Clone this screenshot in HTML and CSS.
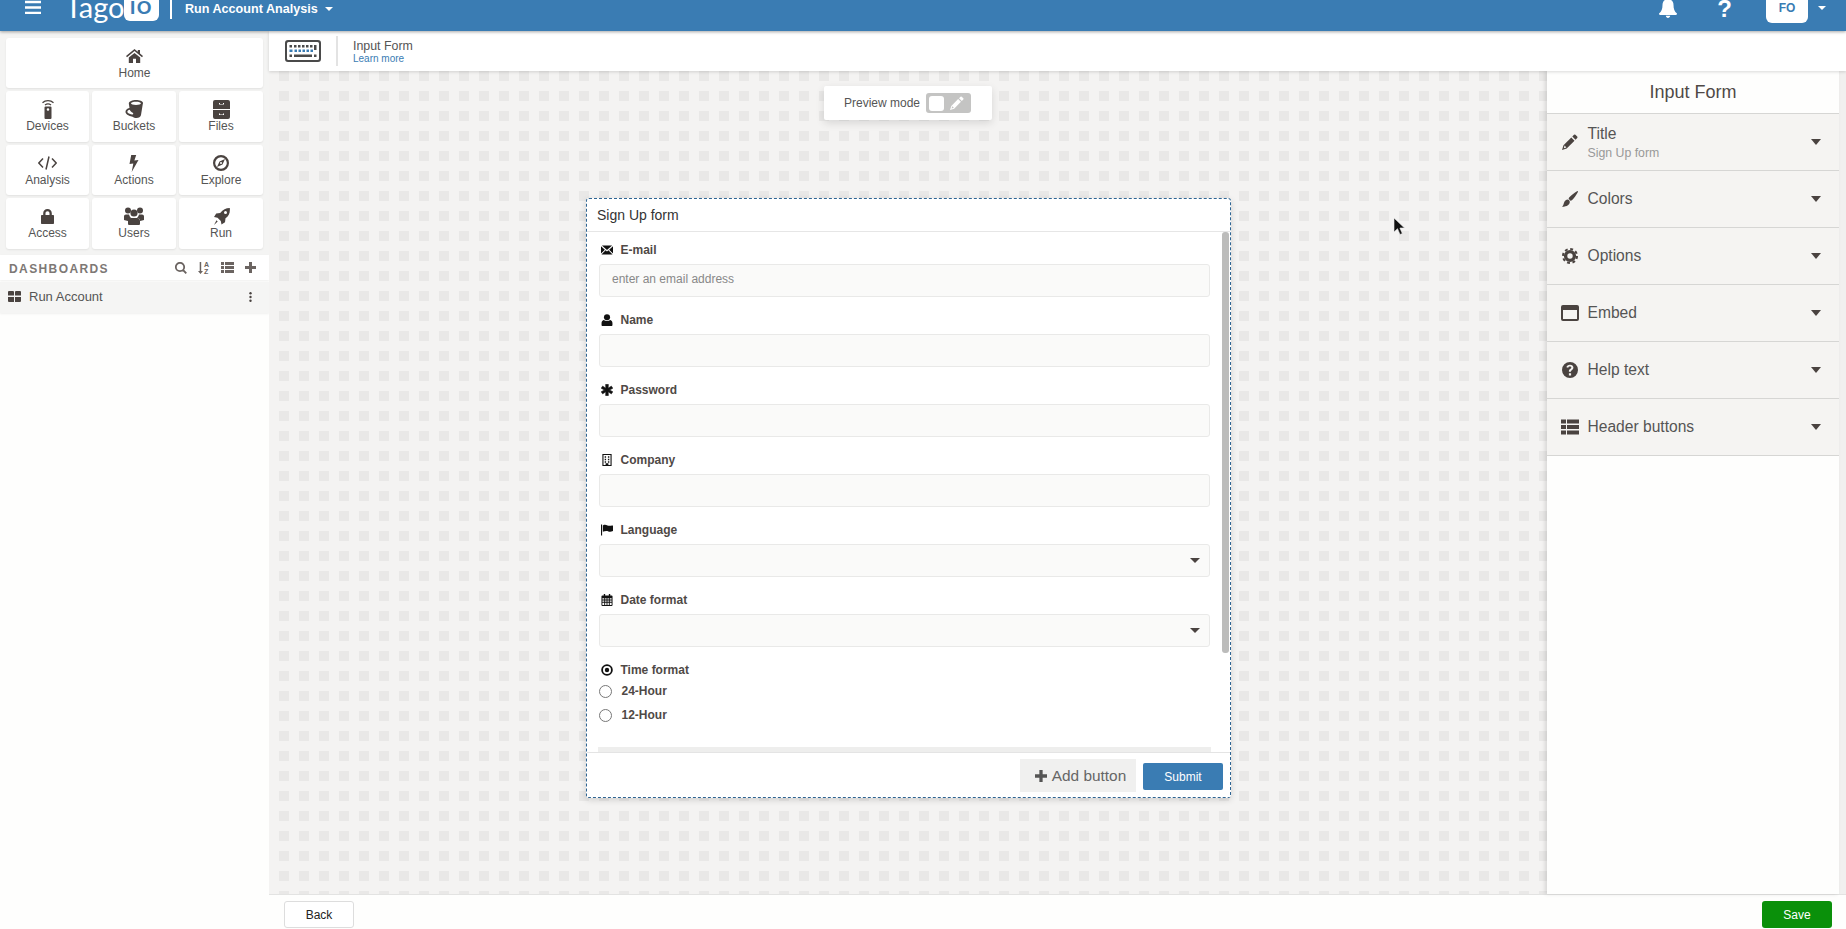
FILE: index.html
```html
<!DOCTYPE html>
<html lang="en">
<head>
<meta charset="utf-8">
<title>Input Form</title>
<link rel="stylesheet" href="styles.css">
</head>
<body>
<svg class="sprite" aria-hidden="true">
  <symbol id="i-home" viewBox="0 0 17 14"><path d="M8.5 0 0 7l1 1.2L8.5 2 16 8.2 17 7l-3-2.5V1h-2.200v1.700zM2.800 8.600 8.500 4l5.700 4.600V14H10V9.800H7V14H2.800z"/></symbol>
  <symbol id="i-device" viewBox="0 0 14 20"><path d="M1.500 3.800C4.500 1 9.500 1 12.500 3.800" fill="none" stroke="currentColor" stroke-width="1.300"/><path d="M4 6c1.800-1.300 4.200-1.300 6 0" fill="none" stroke="currentColor" stroke-width="1.300"/><path fill-rule="evenodd" d="M4.500 7.500h5a1 1 0 0 1 1 1V19a1 1 0 0 1-1 1h-5a1 1 0 0 1-1-1V8.500a1 1 0 0 1 1-1zM7 9.200a1.300 1.300 0 1 0 0 2.600 1.300 1.300 0 0 0 0-2.600z"/></symbol>
  <symbol id="i-bucket" viewBox="0 0 18 18"><path fill-rule="evenodd" d="M3.800 3.500C3.800 1.500 7.500 0 11 0s7 1 7 3c0 .5-.1 1-.3 1.500L16 15c-.3 1.800-2.300 3-4.500 3-1.500 0-3-.5-4-1.300C5.500 16.500 1.800 15 .8 13-.2 11 1.300 8.600 4.500 8zM6 3.300c0 1 2.200 1.700 5 1.700s4.900-.7 4.900-1.700S13.800 1.700 11 1.700 6 2.300 6 3.300zM4.800 9.800c-2 .3-2.900 1.600-2.200 2.700.7 1 3 1.700 4.500 1.900 1.200.2 1.600-1 .6-1.600-1.200-.7-2.500-1.500-2.900-3z"/></symbol>
  <symbol id="i-files" viewBox="0 0 17 19"><path fill-rule="evenodd" d="M2 0h13a2 2 0 0 1 2 2v7H0V2a2 2 0 0 1 2-2zM0 10h17v7a2 2 0 0 1-2 2H2a2 2 0 0 1-2-2zM6 4.500V3h1v1h3V3h1v1.500zM6 15v-1.500h1v1h3v-1h1V15z"/></symbol>
  <symbol id="i-code" viewBox="0 0 19 14"><path d="M5 2.500.8 7 5 11.500M14 2.500 18.200 7 14 11.500M11 .5 8 13.500" fill="none" stroke="currentColor" stroke-width="1.500"/></symbol>
  <symbol id="i-bolt" viewBox="0 0 10 17"><path d="M2.200 0h5L5.400 5.500 9.500 5 2.700 17l1.600-8.500L.500 9z"/></symbol>
  <symbol id="i-compass" viewBox="0 0 16 16"><path fill-rule="evenodd" d="M8 0a8 8 0 1 1 0 16A8 8 0 0 1 8 0zm0 2.200a5.800 5.800 0 1 0 0 11.600A5.800 5.800 0 0 0 8 2.200zM12 4l-2.500 5.500L4 12l2.500-5.500zM8 7a1 1 0 1 0 0 2 1 1 0 0 0 0-2z"/></symbol>
  <symbol id="i-lock" viewBox="0 0 13 15"><path fill-rule="evenodd" d="M6.500 0C9 0 10.800 1.800 10.800 4.300V6h1.200c.6 0 1 .4 1 1v7c0 .6-.4 1-1 1H1c-.6 0-1-.4-1-1V7c0-.6.4-1 1-1h1.200V4.300C2.200 1.800 4 0 6.500 0zm0 2.200c-1.200 0-2 .9-2 2.100V6h4V4.300c0-1.200-.8-2.100-2-2.100z"/></symbol>
  <symbol id="i-users" viewBox="0 0 20 18"><circle cx="4" cy="3.500" r="3"/><circle cx="16" cy="3.500" r="3"/><circle cx="10" cy="6" r="3.600"/><path d="M0 13V9.500C0 8.300.8 7.500 2 7.500h3c.5 1.700 1 2.500 2 3.200-1.500.6-2.600 1.600-3.200 3.300zM20 13V9.500c0-1.200-.8-2-2-2h-3c-.5 1.700-1 2.500-2 3.200 1.500.6 2.600 1.600 3.200 3.300zM7 11h6c1.800 0 3 1.300 3 3v2.500c0 1-.5 1.500-1.500 1.500h-9C4.500 18 4 17.500 4 16.500V14c0-1.700 1.200-3 3-3z"/></symbol>
  <symbol id="i-rocket" viewBox="0 0 17 17"><path fill-rule="evenodd" d="M16.800 0c.5 4.500-1 8-4.300 10.300l-.5 4-3.500 2.200-.7-3.500-3.300-3.300L1 9l2.200-3.500 4-.5C10 1.500 12.800.2 16.800 0zM12.500 3a1.500 1.500 0 1 0 0 3 1.500 1.500 0 0 0 0-3zM3.500 12.300l1.200 1.200L1 17z"/></symbol>
  <symbol id="i-search" viewBox="0 0 12 12"><path d="M5 .8a4.200 4.200 0 1 1 0 8.400A4.200 4.200 0 0 1 5 .8zM8 8l3.300 3.300" fill="none" stroke="currentColor" stroke-width="1.800"/></symbol>
  <symbol id="i-list" viewBox="0 0 13 11"><path d="M0 0h3v3H0zM4 0h9v3H4zM0 4h3v3H0zM4 4h9v3H4zM0 8h3v3H0zM4 8h9v3H4z"/></symbol>
  <symbol id="i-plus" viewBox="0 0 11 11"><path d="M4 0h3v4h4v3H7v4H4V7H0V4h4z"/></symbol>
  <symbol id="i-grid" viewBox="0 0 13 11"><path d="M0 1a1 1 0 0 1 1-1h4a1 1 0 0 1 1 1v3.500H0zM7 1a1 1 0 0 1 1-1h4a1 1 0 0 1 1 1v3.500H7zM0 6h6v5H1a1 1 0 0 1-1-1zM7 6h6v4a1 1 0 0 1-1 1H7z"/></symbol>
  <symbol id="i-kebab" viewBox="0 0 3 10"><circle cx="1.500" cy="1.200" r="1.200"/><circle cx="1.500" cy="5" r="1.200"/><circle cx="1.500" cy="8.800" r="1.200"/></symbol>
  <symbol id="i-mail" viewBox="0 0 13 10"><path d="M1 0h11L6.500 5zM0 1l4.200 3.700L0 8.700zM13 1v7.700L8.800 4.700zM5 5.400l1.500 1.300L8 5.400 12.500 10H.5z"/></symbol>
  <symbol id="i-user" viewBox="0 0 10 11"><circle cx="5" cy="3" r="2.800"/><path d="M2 5.500c1.700 1.300 4.300 1.300 6 0 1.300.3 2 1.500 2 3V10c0 .6-.4 1-1 1H1c-.6 0-1-.4-1-1V8.500c0-1.500.7-2.700 2-3z"/></symbol>
  <symbol id="i-asterisk" viewBox="0 0 12 12"><path stroke="currentColor" stroke-width=".7" d="M4.700.4h2.600l-.2 3.800 3.300-2 1.300 2.100L8.300 6l3.400 1.700-1.300 2.100-3.300-2 .2 3.800H4.700l.2-3.800-3.300 2L.3 7.700 3.700 6 .3 4.300l1.300-2.100 3.300 2z"/></symbol>
  <symbol id="i-building" viewBox="0 0 10 13"><path fill-rule="evenodd" d="M0 0h10v13H0zm1.200 1.200v10.600h2.300V10h3v1.800h2.300V1.200zM2.500 2.500h1.500V4H2.500zM6 2.500h1.500V4H6zM2.500 5.200h1.500v1.500H2.500zM6 5.200h1.500v1.500H6zM2.500 7.900h1.500v1.500H2.500zM6 7.900h1.500v1.500H6z"/></symbol>
  <symbol id="i-flag" viewBox="0 0 13 12"><path d="M0 0h1.200v12H0zM2 1c2-1 3.500-.5 5 0s3 .5 5 0c.5 0 1 0 1 .5V7c-2 1-3.500 1-5 .5S4 7 2 8z"/></symbol>
  <symbol id="i-calendar" viewBox="0 0 12 13"><path fill-rule="evenodd" d="M2.500 0h1.500v1.500h4V0h1.500v1.500H11c.6 0 1 .4 1 1V12c0 .6-.4 1-1 1H1c-.6 0-1-.4-1-1V2.500c0-.6.4-1 1-1h1.500zM1 4.500V6h2V4.500zM4 4.500V6h1.500V4.500zM6.500 4.500V6H8V4.500zM9 4.500V6h2V4.500zM1 7v1.500h2V7zM4 7v1.500h1.500V7zM6.500 7v1.500H8V7zM9 7v1.500h2V7zM1 9.500V12h2V9.500zM4 9.500V12h1.500V9.500zM6.500 9.500V12H8V9.500zM9 9.500V12h2V9.500z"/></symbol>
  <symbol id="i-dot" viewBox="0 0 12 12"><circle cx="6" cy="6" r="4.900" fill="none" stroke="currentColor" stroke-width="1.800"/><circle cx="6" cy="6" r="2.200"/></symbol>
  <symbol id="i-pencil" viewBox="0 0 16 16"><path d="M12 .8a1 1 0 0 1 1.400 0l1.800 1.800a1 1 0 0 1 0 1.400L13.500 5.700 10.300 2.500zM9.300 3.500l3.200 3.200-7.800 7.800L0 16l1.500-4.700zM2.600 11.600l-.8 2.600 2.600-.8z"/></symbol>
  <symbol id="i-brush" viewBox="0 0 16 16"><path d="M15 .2c.6-.4 1.200.3.900.9-1.300 2.500-3.800 6-5.500 7.700-.6.600-1.300.9-2 .9L6.600 7.800c.2-.7.500-1.400 1-1.900C9.500 4 12.500 1.500 15 .2zM5.800 8.600c1 .2 1.900 1.100 2 2.200 0 2.800-2.500 5-7.800 5 1.500-1.100 1.500-2.600 2-4 .5-1.700 2-3.200 3.800-3.200z"/></symbol>
  <symbol id="i-gear" viewBox="0 0 16 16"><circle cx="8" cy="8" r="4.400" fill="none" stroke="currentColor" stroke-width="3.400"/><circle cx="8" cy="8" r="7" fill="none" stroke="currentColor" stroke-width="2" stroke-dasharray="2.900 2.600"/></symbol>
  <symbol id="i-window" viewBox="0 0 18 16"><path fill-rule="evenodd" d="M2 0h14a2 2 0 0 1 2 2v12a2 2 0 0 1-2 2H2a2 2 0 0 1-2-2V2a2 2 0 0 1 2-2zm0 5v9h14V5z"/></symbol>
  <symbol id="i-help" viewBox="0 0 16 16"><path fill-rule="evenodd" d="M8 0a8 8 0 1 1 0 16A8 8 0 0 1 8 0zM6.900 11.200v2.200h2.200v-2.200zM8 2.700c-2 0-3.200 1-3.600 2.500l1.800.6c.3-.8.800-1.200 1.700-1.200s1.400.4 1.400 1c0 .7-.5 1-1.200 1.500-1 .6-1.200 1.300-1.200 2.200v.4h2v-.3c0-.5.300-.7 1-1.200.9-.6 1.500-1.400 1.500-2.600 0-1.700-1.400-2.900-3.400-2.900z"/></symbol>
  <symbol id="i-table" viewBox="0 0 18 15"><path d="M0 0h5v4H0zM6 0h12v4H6zM0 5.500h5v4H0zM6 5.500h12v4H6zM0 11h5v4H0zM6 11h12v4H6z"/></symbol>
  <symbol id="i-bell" viewBox="0 0 18 18"><path d="M9 -2c1 0 1.500.6 1.500 1.400C13 0 14.500 2 14.500 5c0 4 1 6.500 3.500 8.500 0 .8-.5 1.500-1.300 1.500H1.300C.5 15 0 14.300 0 13.500 2.500 11.500 3.500 9 3.500 5 3.500 2 5-.1 7.500-.6 7.500-1.400 8-2 9-2zM6.800 15.800h4.400C11 17.100 10.100 18 9 18s-2-.9-2.200-2.200z"/></symbol>
  <symbol id="i-keyboard" viewBox="0 0 36 22"><path fill-rule="evenodd" d="M3 0h30a3 3 0 0 1 3 3v16a3 3 0 0 1-3 3H3a3 3 0 0 1-3-3V3a3 3 0 0 1 3-3zm.5 2A1.500 1.500 0 0 0 2 3.500v15A1.500 1.500 0 0 0 3.500 20h29a1.500 1.500 0 0 0 1.500-1.500v-15A1.500 1.500 0 0 0 32.500 2z"/><path d="M4.500 5H7v2.500H4.500zM9 5h2.500v2.500H9zM13 5h2.500v2.500H13zM17 5h2.500v2.500H17zM21 5h2.500v2.500H21zM25 5h2.500v2.500H25zM29 5h2.500v5H29z"/><path d="M4.500 9.500h3v2.500h-3zM9.500 9.500H12v2.500H9.500zM13.500 9.500H16v2.500h-2.500zM17.500 9.500H20v2.500h-2.500zM21.500 9.500H24v2.500h-2.500zM25.500 9.500H28v2.500h-2.500z" fill="#3a7cb3"/><path d="M4.500 14.500H7V17H4.500zM9 14.500h18V17H9zM29 14.500h2.500V17H29z"/></symbol>
</svg>

<div class="app">
  <header class="topbar">
    <svg class="hamburger" viewBox="0 0 16 14"><path d="M0 .8h16v2.400H0zM0 6.300h16v2.400H0zM0 11.800h16v2.400H0z"/></svg>
    <span class="logo-word">Tago</span>
    <span class="logo-box">IO</span>
    <span class="top-sep"></span>
    <span class="top-title">Run Account Analysis</span>
    <span class="caret caret-white caret-title"></span>
    <span class="top-spacer"></span>
    <svg class="top-bell"><use href="#i-bell"/></svg>
    <span class="top-help">?</span>
    <span class="top-user">FO</span>
    <span class="caret caret-white caret-user"></span>
  </header>

  <div class="main">
    <aside class="sidebar">
      <nav class="nav-grid">
        <a class="nav-btn nav-home"><svg class="ic-home"><use href="#i-home"/></svg><span>Home</span></a>
        <a class="nav-btn"><svg class="ic-device"><use href="#i-device"/></svg><span>Devices</span></a>
        <a class="nav-btn"><svg class="ic-bucket"><use href="#i-bucket"/></svg><span>Buckets</span></a>
        <a class="nav-btn"><svg class="ic-files"><use href="#i-files"/></svg><span>Files</span></a>
        <a class="nav-btn"><svg class="ic-code"><use href="#i-code"/></svg><span>Analysis</span></a>
        <a class="nav-btn"><svg class="ic-bolt"><use href="#i-bolt"/></svg><span>Actions</span></a>
        <a class="nav-btn"><svg class="ic-compass"><use href="#i-compass"/></svg><span>Explore</span></a>
        <a class="nav-btn"><svg class="ic-lock"><use href="#i-lock"/></svg><span>Access</span></a>
        <a class="nav-btn"><svg class="ic-users"><use href="#i-users"/></svg><span>Users</span></a>
        <a class="nav-btn"><svg class="ic-rocket"><use href="#i-rocket"/></svg><span>Run</span></a>
      </nav>
      <div class="dash-head">
        <span class="dash-title">DASHBOARDS</span>
        <svg class="dash-search"><use href="#i-search"/></svg>
        <span class="dash-sort"><svg viewBox="0 0 5 12"><path d="M1.700 0h1.500v9H5L2.500 12 0 9h1.700z"/></svg><span class="sort-letters">A<br>Z</span></span>
        <svg class="dash-list"><use href="#i-list"/></svg>
        <svg class="dash-plus"><use href="#i-plus"/></svg>
      </div>
      <div class="dash-row">
        <svg class="dash-grid"><use href="#i-grid"/></svg>
        <span class="dash-name">Run Account</span>
        <svg class="dash-kebab"><use href="#i-kebab"/></svg>
      </div>
    </aside>

    <div class="content">
      <div class="subbar">
        <svg class="sub-key"><use href="#i-keyboard"/></svg>
        <span class="sub-sep"></span>
        <div class="sub-text">
          <div class="sub-title">Input Form</div>
          <a class="sub-link">Learn more</a>
        </div>
      </div>

      <div class="work">
        <section class="canvas">
          <div class="preview">
            <span>Preview mode</span>
            <span class="toggle"><span class="knob"></span><svg class="toggle-pen"><use href="#i-pencil"/></svg></span>
          </div>

          <div class="widget">
            <div class="widget-title">Sign Up form</div>
            <div class="widget-body">
              <div class="field">
                <label class="field-label"><svg class="fi fi-mail"><use href="#i-mail"/></svg>E-mail</label>
                <div class="input placeholder">enter an email address</div>
              </div>
              <div class="field">
                <label class="field-label"><svg class="fi fi-user"><use href="#i-user"/></svg>Name</label>
                <div class="input"></div>
              </div>
              <div class="field">
                <label class="field-label"><svg class="fi fi-ast"><use href="#i-asterisk"/></svg>Password</label>
                <div class="input"></div>
              </div>
              <div class="field">
                <label class="field-label"><svg class="fi fi-bld"><use href="#i-building"/></svg>Company</label>
                <div class="input"></div>
              </div>
              <div class="field">
                <label class="field-label"><svg class="fi fi-flag"><use href="#i-flag"/></svg>Language</label>
                <div class="input select"><span class="caret caret-dark"></span></div>
              </div>
              <div class="field">
                <label class="field-label"><svg class="fi fi-cal"><use href="#i-calendar"/></svg>Date format</label>
                <div class="input select"><span class="caret caret-dark"></span></div>
              </div>
              <div class="field-radio">
                <label class="field-label"><svg class="fi fi-dot"><use href="#i-dot"/></svg>Time format</label>
                <div class="radio-row"><span class="radio"></span>24-Hour</div>
                <div class="radio-row"><span class="radio"></span>12-Hour</div>
              </div>
              <div class="next-bar"></div>
              <span class="scroll-thumb"></span>
            </div>
            <div class="widget-foot">
              <button class="btn-add"><svg class="add-plus"><use href="#i-plus"/></svg>Add button</button>
              <button class="btn-submit">Submit</button>
            </div>
          </div>

          <svg class="cursor" viewBox="0 0 12 19"><path d="M1 1v14l3.500-3.300L7 17.500l2.300-1-2.400-5.500H11.500z" fill="#111" stroke="#eee" stroke-width=".6"/></svg>
        </section>

        <aside class="panel">
          <h2 class="panel-title">Input Form</h2>
          <div class="acc">
            <svg class="acc-ic"><use href="#i-pencil"/></svg>
            <div class="acc-text acc-double"><div>Title</div><div class="acc-sub">Sign Up form</div></div>
            <span class="caret caret-dark caret-acc"></span>
          </div>
          <div class="acc">
            <svg class="acc-ic"><use href="#i-brush"/></svg>
            <div class="acc-text">Colors</div>
            <span class="caret caret-dark caret-acc"></span>
          </div>
          <div class="acc">
            <svg class="acc-ic"><use href="#i-gear"/></svg>
            <div class="acc-text">Options</div>
            <span class="caret caret-dark caret-acc"></span>
          </div>
          <div class="acc">
            <svg class="acc-ic acc-wide"><use href="#i-window"/></svg>
            <div class="acc-text">Embed</div>
            <span class="caret caret-dark caret-acc"></span>
          </div>
          <div class="acc">
            <svg class="acc-ic"><use href="#i-help"/></svg>
            <div class="acc-text">Help text</div>
            <span class="caret caret-dark caret-acc"></span>
          </div>
          <div class="acc">
            <svg class="acc-ic acc-wide"><use href="#i-table"/></svg>
            <div class="acc-text">Header buttons</div>
            <span class="caret caret-dark caret-acc"></span>
          </div>
        </aside>
        <div class="strip"></div>
      </div>

      <footer class="bottombar">
        <button class="btn-back">Back</button>
        <button class="btn-save">Save</button>
      </footer>
    </div>
  </div>
</div>
</body>
</html>
```

FILE: styles.css
```css
* { box-sizing: border-box; }
html, body { margin: 0; padding: 0; height: 100%; overflow: hidden; }
body { font-family: "Liberation Sans", Arial, sans-serif; font-size: 12px; color: #555; background: #fefefd; }
svg { fill: currentColor; display: block; }
.sprite { display: none; }
button { font-family: inherit; cursor: pointer; }

.app { display: flex; flex-direction: column; height: 929px; width: 1846px; overflow: hidden; }

/* top bar */
.topbar { position: relative; z-index: 5; flex: none; height: 31px; background: #3a7cb3; color: #fff; display: flex; align-items: flex-start; overflow: hidden; box-shadow: 0 1px 3px rgba(0,0,0,.35); padding-left: 25px; }
.hamburger { width: 16px; height: 14px; margin-right: 24px; }
.logo-word { font-family: Lato, "Liberation Sans", sans-serif; font-weight: 400; font-size: 29px; line-height: 31px; margin-top: -9px; width: 59px; }
.logo-box { width: 35px; height: 30px; margin-top: -9px; background: #fff; color: #3a7cb3; border-radius: 6px; font-weight: 700; font-size: 19px; line-height: 33px; text-align: center; letter-spacing: 1.500px; }
.top-sep { width: 2px; height: 19px; background: #fff; margin-left: 11px; margin-right: 13px; }
.top-title { font-weight: 700; font-size: 12.600px; line-height: 18px; }
.caret { display: inline-block; width: 0; height: 0; border-style: solid; border-width: 5px 5px 0; border-color: transparent; }
.caret-white { border-top-color: #fff; border-width: 4px 4.500px 0; }
.caret-title { margin: 7px 0 0 7px; }
.top-spacer { flex: 1; }
.top-bell { width: 18px; height: 18px; margin-right: 40px; }
.top-help { width: 15px; font-weight: 700; font-size: 24px; line-height: 17px; text-align: center; margin-right: 34px; }
.top-user { width: 42px; height: 23px; background: #fff; color: #3a7cb3; font-weight: 700; font-size: 12px; line-height: 17px; text-align: center; border-radius: 0 0 6px 6px; }
.caret-user { margin: 6px 20px 0 10px; }

.main { flex: 1; display: flex; min-height: 0; }

/* sidebar */
.sidebar { flex: none; width: 269px; background: #fefefd; }
.nav-grid { display: grid; grid-template-columns: 83px 84px 84px; grid-template-rows: 50px 51px 50px 51px; gap: 3px; padding: 7px 6px 6px 6px; background: #f4f4f3; }
.nav-btn { background: #fff; border-radius: 3px; display: grid; grid-template-rows: 20px 14px; align-content: start; justify-items: center; align-items: center; padding-top: 8px; color: #4a4340; box-shadow: 0 1px 2px rgba(0,0,0,.08); }
.nav-btn span { font-size: 12px; line-height: 14px; color: #555; }
.nav-home { grid-column: 1 / 4; }
.ic-home { width: 17px; height: 14px; }
.ic-device { width: 14px; height: 20px; }
.ic-bucket { width: 18px; height: 18px; }
.ic-files { width: 17px; height: 19px; }
.ic-code { width: 19px; height: 14px; }
.ic-bolt { width: 10px; height: 17px; }
.ic-compass { width: 16px; height: 16px; }
.ic-lock { width: 13px; height: 15px; }
.ic-users { width: 20px; height: 18px; }
.ic-rocket { width: 17px; height: 17px; }

.dash-head { height: 25px; display: flex; align-items: center; padding: 2px 0 0 9px; background: #fff; color: #6b6461; box-shadow: 0 1px 2px rgba(0,0,0,.06); }
.dash-title { font-weight: 700; font-size: 12px; letter-spacing: 1.400px; color: #7d7875; width: 166px; }
.dash-search { width: 12px; height: 12px; margin-top: -2px; }
.dash-sort { display: flex; align-items: center; margin: -2px 0 0 11px; width: 13px; height: 14px; }
.dash-sort svg { width: 5px; height: 12px; margin-right: 1px; }
.sort-letters { font-size: 7px; line-height: 7px; font-weight: 700; }
.dash-list { width: 13px; height: 11px; margin: -2px 0 0 10px; }
.dash-plus { width: 11px; height: 11px; margin: -2px 0 0 11px; }
.dash-row { margin-top: 2px; height: 31px; display: flex; align-items: center; padding: 0 0 2px 8px; background: #f5f5f4; color: #4a4340; box-shadow: 0 1px 2px rgba(0,0,0,.06); }
.dash-grid { width: 13px; height: 11px; margin-right: 8px; }
.dash-name { font-size: 13px; color: #555; width: 220px; }
.dash-kebab { width: 3px; height: 10px; }

/* content */
.content { flex: 1; min-width: 0; display: flex; flex-direction: column; }
.subbar { position: relative; z-index: 4; flex: none; height: 40px; background: #fff; display: flex; align-items: center; padding-left: 16px; box-shadow: 0 1px 3px rgba(0,0,0,.15); }
.sub-key { width: 36px; height: 22px; color: #4a4a4a; }
.sub-sep { width: 2px; height: 30px; background: #e3e3e3; margin: 0 15px; }
.sub-title { font-size: 12.400px; line-height: 14px; color: #555; }
.sub-link { display: block; font-size: 10px; line-height: 11px; color: #3a7cb3; }

.work { flex: 1; min-height: 0; display: flex; background: #f0efee; }
.canvas { position: relative; flex: none; width: 1278px; overflow: hidden; padding: 127px 0 0 317px; background-color: #f4f3f2; background-image: url("data:image/svg+xml,%3Csvg xmlns='http://www.w3.org/2000/svg' width='20' height='20'%3E%3Crect x='10' y='0' width='10' height='10' fill='%23e9e8e7'/%3E%3C/svg%3E"); background-size: 20px 20px; }

.preview { position: absolute; left: 555px; top: 15px; width: 168px; height: 34px; background: #fff; border-radius: 2px; box-shadow: 0 3px 8px rgba(0,0,0,.12); display: flex; align-items: center; padding-left: 20px; color: #555; }
.toggle { margin-left: 6px; width: 45px; height: 20px; background: #c4c4c3; border-radius: 3px; display: flex; align-items: center; padding-left: 3px; }
.knob { width: 15px; height: 15px; background: #fff; border-radius: 3px; }
.toggle-pen { width: 14px; height: 14px; margin-left: 6px; color: #fff; }

.widget { width: 645px; height: 600px; background: #fff; border: 1px dashed #2f6593; border-radius: 3px; display: flex; flex-direction: column; box-shadow: 0 2px 6px rgba(0,0,0,.15); }
.widget-title { flex: none; height: 33px; padding-left: 10px; font-size: 14px; line-height: 32px; color: #333; border-bottom: 1px solid #e6e6e6; }
.widget-body { position: relative; flex: 1; min-height: 0; overflow: hidden; padding: 8px 0 0 12px; }
.field { width: 611px; margin-bottom: 13px; }
.field-label { display: flex; align-items: center; height: 20px; margin-bottom: 4px; font-weight: 700; font-size: 12px; color: #4f4946; }
.fi { color: #111; flex: none; margin-left: 2px; margin-right: 7.500px; width: 12px; height: 12px; }
.fi-mail { width: 12px; height: 10px; }
.input { height: 33px; background: #fafaf9; border: 1px solid #e9e9e8; border-radius: 3px; padding-left: 12px; font-size: 12px; line-height: 29px; position: relative; }
.placeholder { color: #888; }
.select { display: flex; align-items: center; justify-content: flex-end; padding-right: 9px; }
.caret-dark { border-top-color: #4a4340; border-width: 5px 5px 0; }
.field-radio { width: 612px; }
.field-radio .field-label { margin-bottom: -1px; }
.radio-row { display: flex; align-items: center; height: 24px; font-weight: 700; font-size: 12px; color: #4f4946; }
.radio { width: 13px; height: 13px; border: 1px solid #777; border-radius: 50%; background: #fff; margin-right: 9.500px; }
.next-bar { width: 613px; height: 10px; margin-top: 20px; margin-left: -1px; background: #eeeeed; }
.scroll-thumb { position: absolute; right: 1px; top: 0; width: 7px; height: 421px; background: #bcbcbb; border-radius: 3px; }

.widget-foot { flex: none; height: 45px; background: #fff; border-top: 1px solid #e4e4e4; display: flex; align-items: center; justify-content: flex-end; gap: 7px; padding-right: 7px; }
.btn-add { width: 116px; height: 33px; margin-top: 1px; background: #f0f0ef; border: 0; color: #666; font-size: 15.400px; display: flex; align-items: center; justify-content: center; padding: 0 0 0 5px; }
.add-plus { width: 12px; height: 12px; margin-right: 5px; color: #555; }
.btn-submit { width: 80px; height: 27px; margin-top: 3px; background: #3a7cb3; border: 0; border-radius: 2px; color: #fff; font-size: 12px; padding: 0; }

.cursor { position: absolute; left: 1124px; top: 146px; width: 12px; height: 19px; }

/* right panel */
.panel { position: relative; z-index: 2; flex: none; width: 292px; background: #fefefd; box-shadow: -2px 0 4px rgba(0,0,0,.12); }
.panel-title { margin: 0; height: 43px; font-weight: 400; font-size: 18px; line-height: 42px; text-align: center; color: #4f4946; border-bottom: 1px solid #d6d6d4; }
.acc { height: 57px; background: #f5f4f2; border-bottom: 1px solid #d6d6d4; display: flex; align-items: center; padding-left: 15px; color: #4a4340; }
.acc-ic { width: 16px; height: 16px; margin-right: 10px; flex: none; }
.acc-wide { width: 18px; height: 16px; margin-left: -1px; margin-right: 9px; }
.acc-text { flex: 1; font-size: 15.600px; line-height: 18px; color: #555; margin-left: -.500px; }
.acc-double { padding-top: 2px; }
.acc-sub { font-size: 12.300px; line-height: 15px; color: #999; margin-top: 3px; }
.caret-acc { border-width: 6px 5.500px 0; margin-right: 18px; }
.strip { flex: 1; background: #f1f0ef; }

/* bottom */
.bottombar { flex: none; height: 35px; background: #fefefd; border-top: 1px solid #e3e3e2; display: flex; justify-content: space-between; padding: 6px 14px 0 15px; }
.btn-back { width: 70px; height: 27px; background: #fff; border: 1px solid #ddd; border-radius: 3px; color: #222; font-size: 12px; padding: 0; }
.btn-save { width: 70px; height: 27px; background: #0a900a; border: 0; border-radius: 3px; color: #fff; font-size: 12px; padding: 0; }
```
